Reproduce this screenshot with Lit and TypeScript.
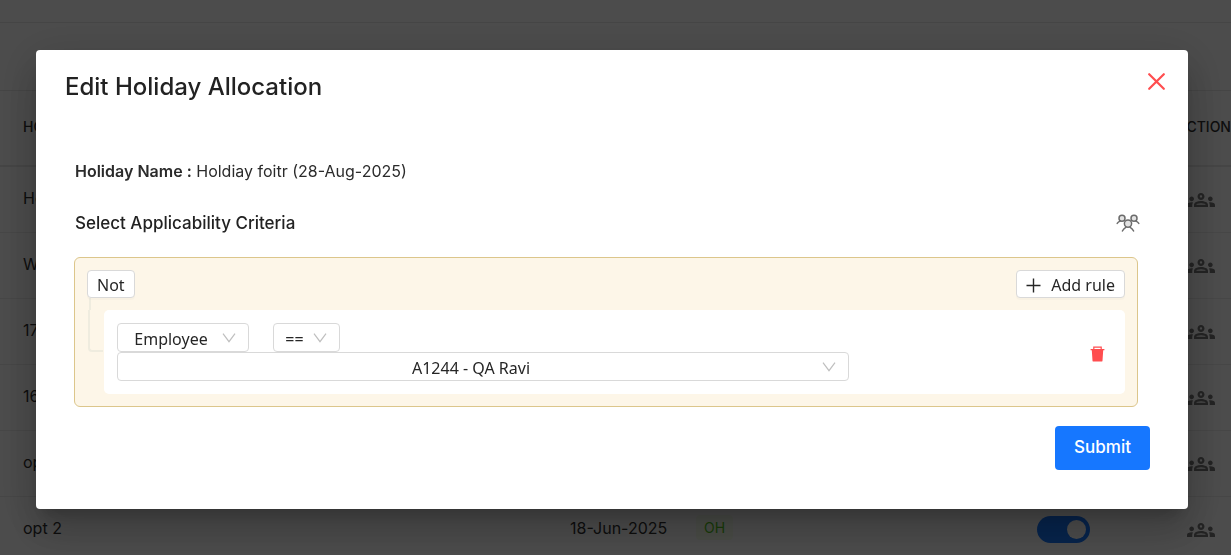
import { LitElement, html, css, svg } from "lit";
import { customElement, property, state } from "lit/decorators.js";

interface Holiday {
  name: string;
  date: string;
  type: string;
  active: boolean;
}

const HOLIDAYS: Holiday[] = [
  { name: "Holi", date: "14-Mar-2025", type: "OH", active: true },
  { name: "Workday", date: "01-May-2025", type: "OH", active: true },
  { name: "17 Jun", date: "17-Jun-2025", type: "OH", active: true },
  { name: "16 Jun", date: "16-Jun-2025", type: "OH", active: true },
  { name: "opt 1", date: "19-Jun-2025", type: "OH", active: true },
  { name: "opt 2", date: "18-Jun-2025", type: "OH", active: true },
];

const groupsIcon = svg`<svg viewBox="0 0 24 24" width="28" height="28" fill="currentColor" aria-hidden="true">
  <path d="M4 13c1.1 0 2-.9 2-2s-.9-2-2-2-2 .9-2 2 .9 2 2 2zm1.13 1.1c-.37-.06-.74-.1-1.13-.1-.99 0-1.93.21-2.78.58C.48 14.9 0 15.62 0 16.43V18h4.5v-1.61c0-.83.23-1.61.63-2.29zM20 13c1.1 0 2-.9 2-2s-.9-2-2-2-2 .9-2 2 .9 2 2 2zm4 3.43c0-.81-.48-1.53-1.22-1.85-.85-.37-1.79-.58-2.78-.58-.39 0-.76.04-1.13.1.4.68.63 1.46.63 2.29V18H24v-1.57zm-7.76-2.78c-1.17-.52-2.61-.9-4.24-.9-1.63 0-3.07.39-4.24.9C6.68 14.13 6 15.21 6 16.39V18h12v-1.61c0-1.18-.68-2.26-1.76-2.74zM8.07 16c.09-.23.13-.39.91-.69.97-.38 1.99-.56 3.02-.56s2.05.18 3.02.56c.77.3.81.46.91.69H8.07zM12 8c.55 0 1 .45 1 1s-.45 1-1 1-1-.45-1-1 .45-1 1-1m0-2c-1.66 0-3 1.34-3 3s1.34 3 3 3 3-1.34 3-3-1.34-3-3-3z"/>
</svg>`;

const peopleIcon = svg`<svg viewBox="0 0 24 18" width="24" height="18" fill="none" stroke="#6b6b6b" stroke-width="1.5" stroke-linecap="round" aria-hidden="true">
  <circle cx="6" cy="4.2" r="3" fill="#e3e3e3"/>
  <circle cx="18" cy="4.2" r="3" fill="#e3e3e3"/>
  <path d="M1.2 9.4c.8-1.1 1.8-1.8 3-2.3M22.8 9.4c-.8-1.1-1.8-1.8-3-2.3"/>
  <circle cx="12" cy="9.6" r="3.6" fill="#e3e3e3"/>
  <path d="M6.4 17c.7-1.4 1.8-2.7 3.4-3.6M17.6 17c-.7-1.4-1.8-2.7-3.4-3.6"/>
</svg>`;

@customElement("holiday-table")
export class HolidayTable extends LitElement {
  @property({ attribute: false }) rows: Holiday[] = [];

  static styles = css`
    :host {
      display: block;
      color: #2f2f2f;
      background: #fff;
    }
    .bar {
      height: 22px;
      border-bottom: 1px solid #e8e8e8;
    }
    .tools {
      height: 67px;
      border-bottom: 1px solid #e8e8e8;
    }
    .grid {
      width: 100%;
      border-collapse: separate;
      border-spacing: 0;
      table-layout: fixed;
    }
    th {
      height: 76px;
      padding: 0 0 4px 23px;
      border-bottom: 2px solid #e8e8e8;
      text-align: left;
      font-size: 14px;
      font-weight: 500;
      box-sizing: border-box;
      white-space: nowrap;
    }
    td {
      height: 66px;
      padding: 0 0 4px 23px;
      border-bottom: 1px solid #ececec;
      font-size: 16px;
      box-sizing: border-box;
      white-space: nowrap;
    }
    .date {
      width: 109px;
      padding-left: 0;
    }
    .wide {
      width: 570px;
    }
    .type {
      padding-left: 17px;
    }
    .status {
      width: 140px;
      padding-left: 0;
    }
    .actions {
      width: 54px;
      padding-left: 0;
    }
    td.status {
      padding-bottom: 0;
    }
    td.actions {
      padding: 0 0 0 10px;
    }
    .tag {
      display: inline-block;
      padding: 4px 8px;
      border-radius: 4px;
      background: #f6ffed;
      color: #52c41a;
      font-size: 14px;
    }
    .switch {
      display: block;
      appearance: none;
      width: 53px;
      height: 27px;
      margin: 0;
      padding: 4px;
      border-radius: 14px;
      background: #1677ff;
      box-sizing: border-box;
    }
    .switch::before {
      content: "";
      display: block;
      width: 19px;
      height: 19px;
      margin-left: auto;
      border-radius: 50%;
      background: #fff;
    }
    .icon {
      display: block;
      padding: 0;
      border: 0;
      background: none;
      color: #777;
    }
    .icon svg {
      display: block;
    }
  `;

  render() {
    return html`
      <div class="bar"></div>
      <div class="tools"></div>
      <table class="grid">
        <thead>
          <tr>
            <th class="wide">HOLIDAY NAME</th>
            <th class="date">DATE</th>
            <th class="type">TYPE</th>
            <th class="status">STATUS</th>
            <th class="actions">ACTION</th>
          </tr>
        </thead>
        <tbody>
          ${this.rows.map(
            (r) => html`<tr>
              <td>${r.name}</td>
              <td class="date">${r.date}</td>
              <td class="type"><span class="tag">${r.type}</span></td>
              <td class="status">
                <input class="switch" type="checkbox" role="switch" aria-label="Active: ${r.name}" .checked=${r.active} />
              </td>
              <td class="actions">
                <button class="icon" aria-label="Allocate ${r.name}">${groupsIcon}</button>
              </td>
            </tr>`
          )}
        </tbody>
      </table>
    `;
  }
}

@customElement("rule-select")
export class RuleSelect extends LitElement {
  @property() label = "";
  @property({ attribute: false }) options: string[] = [];

  static styles = css`
    :host {
      display: grid;
      align-items: center;
    }
    select,
    svg {
      grid-area: 1 / 1;
    }
    select {
      appearance: none;
      width: 100%;
      height: 29px;
      margin: 0;
      padding: 2px 24px 0 0;
      border: 1px solid #d9d9d9;
      border-radius: 4px;
      background: #fff;
      color: #262626;
      font: 16px/24px "Noto Sans", sans-serif;
      text-align: center;
      text-align-last: center;
      box-sizing: border-box;
    }
    svg {
      justify-self: end;
      margin-right: 13px;
      pointer-events: none;
    }
  `;

  render() {
    return html`
      <select aria-label=${this.label}>
        ${this.options.map((o) => html`<option>${o}</option>`)}
      </select>
      <svg viewBox="0 0 14 10" width="14" height="10" fill="none" stroke="#bfbfbf" stroke-width="1.2" aria-hidden="true">
        <path d="M1 .7l6 8 6-8" />
      </svg>
    `;
  }
}

@customElement("rule-group")
export class RuleGroup extends LitElement {
  @state() private negated = false;

  static styles = css`
    :host {
      display: block;
      padding: 12px;
      border: 1px solid #dcc68b;
      border-radius: 6px;
      background: #fdf6e8;
      font-family: "Noto Sans", sans-serif;
    }
    .head {
      display: flex;
      justify-content: space-between;
    }
    .btn {
      display: flex;
      align-items: center;
      gap: 10px;
      height: 28px;
      padding: 2px 9px 0;
      border: 1px solid #d9d9d9;
      border-radius: 4px;
      background: #fff;
      box-shadow: 0 2px 0 rgba(0, 0, 0, 0.02);
      color: #262626;
      font: 16px/24px "Noto Sans", sans-serif;
    }
    .stem {
      width: 2px;
      height: 12px;
      margin-left: 2px;
      background: #efecdf;
    }
    .body {
      display: flex;
      align-items: flex-start;
    }
    .branch {
      width: 15px;
      height: 42px;
      margin-left: 1px;
      border: solid #efecdf;
      border-width: 0 0 2px 2px;
      border-bottom-left-radius: 4px;
      box-sizing: border-box;
      margin-right: 1px;
    }
    .rule {
      flex: 1;
      display: flex;
      align-items: center;
      justify-content: space-between;
      padding: 13px;
      border-radius: 5px;
      background: #fff;
    }
    .fields {
      flex: 0 1 732px;
    }
    .pair {
      display: flex;
      gap: 24px;
    }
    .field {
      width: 132px;
    }
    .operator {
      width: 67px;
    }
    .trash {
      padding: 4px 7px 0;
      border: 0;
      background: none;
    }
    svg {
      display: block;
    }
  `;

  render() {
    return html`
      <div class="head">
        <button class="btn" aria-pressed=${this.negated} @click=${() => (this.negated = !this.negated)}>Not</button>
        <button class="btn">
          <svg viewBox="0 0 15 15" width="15" height="15" fill="none" stroke="#262626" stroke-width="1.4" aria-hidden="true">
            <path d="M7.5 .5v14M.5 7.5h14" />
          </svg>
          Add rule
        </button>
      </div>
      <div class="stem"></div>
      <div class="body">
        <div class="branch"></div>
        <div class="rule">
          <div class="fields">
            <div class="pair">
              <rule-select class="field" label="Field" .options=${["Employee"]}></rule-select>
              <rule-select class="operator" label="Operator" .options=${["=="]}></rule-select>
            </div>
            <rule-select label="Value" .options=${["A1244 - QA Ravi"]}></rule-select>
          </div>
          <button class="trash" aria-label="Delete rule">
            <svg viewBox="0 0 15 16" width="15" height="16" aria-hidden="true">
              <path d="M3.8 3.2V1.1h7.4v2.1" fill="none" stroke="#ff4d4f" stroke-width="1.2" />
              <path d="M.6 3h13.8v1.3h-1.2l-.7 10.4q-.1.9-1 .9H3.5q-.9 0-1-.9L1.8 4.3H.6z" fill="#ff4d4f" />
            </svg>
          </button>
        </div>
      </div>
    `;
  }
}

@customElement("app-root")
export class AppRoot extends LitElement {
  static styles = css`
    :host {
      display: block;
      height: 100vh;
      overflow: hidden;
      font-family: Inter, sans-serif;
      color: #2b2b2b;
    }
    .overlay {
      position: fixed;
      inset: 0;
      display: flex;
      align-items: flex-start;
      padding: 50px 43px 46px 36px;
      background: rgba(0, 0, 0, 0.7);
    }
    .modal {
      flex: 1;
      min-width: 0;
      padding: 21px 38px 39px;
      border-radius: 4px;
      background: #fff;
      box-shadow: 0 11px 15px -7px rgba(0, 0, 0, 0.2), 0 24px 38px 3px rgba(0, 0, 0, 0.14),
        0 9px 46px 8px rgba(0, 0, 0, 0.12);
    }
    .title-row {
      display: flex;
      align-items: flex-start;
      justify-content: space-between;
      margin: 0 -15px 56px -9px;
    }
    h2 {
      margin: 0;
      font-size: 24px;
      line-height: 32px;
      font-weight: 500;
      color: #222;
    }
    .close {
      padding: 2px 0;
      border: 0;
      background: none;
    }
    .name {
      margin: 0 0 28px;
      padding-left: 1px;
      font-size: 16px;
      line-height: 24px;
    }
    .key {
      font-weight: 600;
    }
    .criteria {
      display: flex;
      align-items: center;
      justify-content: space-between;
      margin-bottom: 22px;
      padding: 0 10px 0 1px;
    }
    h3 {
      margin: 0;
      font-size: 17px;
      line-height: 24px;
      font-weight: 500;
      color: #222;
    }
    .people {
      padding: 0;
      border: 0;
      background: none;
    }
    svg {
      display: block;
    }
    rule-group {
      margin-right: 12px;
    }
    .foot {
      display: flex;
      justify-content: flex-end;
      margin-top: 19px;
    }
    .submit {
      height: 44px;
      padding: 0 19px 2px;
      border: 0;
      border-radius: 4px;
      background: #1677ff;
      color: #fff;
      font: 500 17px/24px Inter, sans-serif;
    }
  `;

  render() {
    return html`
      <holiday-table .rows=${HOLIDAYS}></holiday-table>
      <div class="overlay">
        <section class="modal" role="dialog" aria-modal="true" aria-labelledby="title">
          <div class="title-row">
            <h2 id="title">Edit Holiday Allocation</h2>
            <button class="close" aria-label="Close">
              <svg viewBox="0 0 17 17" width="17" height="17" fill="none" stroke="#ff4d4f" stroke-width="2.2" stroke-linecap="round" aria-hidden="true">
                <path d="M1.2 1.2l14.6 14.6M15.8 1.2L1.2 15.8" />
              </svg>
            </button>
          </div>
          <p class="name"><span class="key">Holiday Name :</span> Holdiay foitr (28-Aug-2025)</p>
          <div class="criteria">
            <h3>Select Applicability Criteria</h3>
            <button class="people" aria-label="View applicable employees">${peopleIcon}</button>
          </div>
          <rule-group></rule-group>
          <div class="foot">
            <button class="submit">Submit</button>
          </div>
        </section>
      </div>
    `;
  }
}
